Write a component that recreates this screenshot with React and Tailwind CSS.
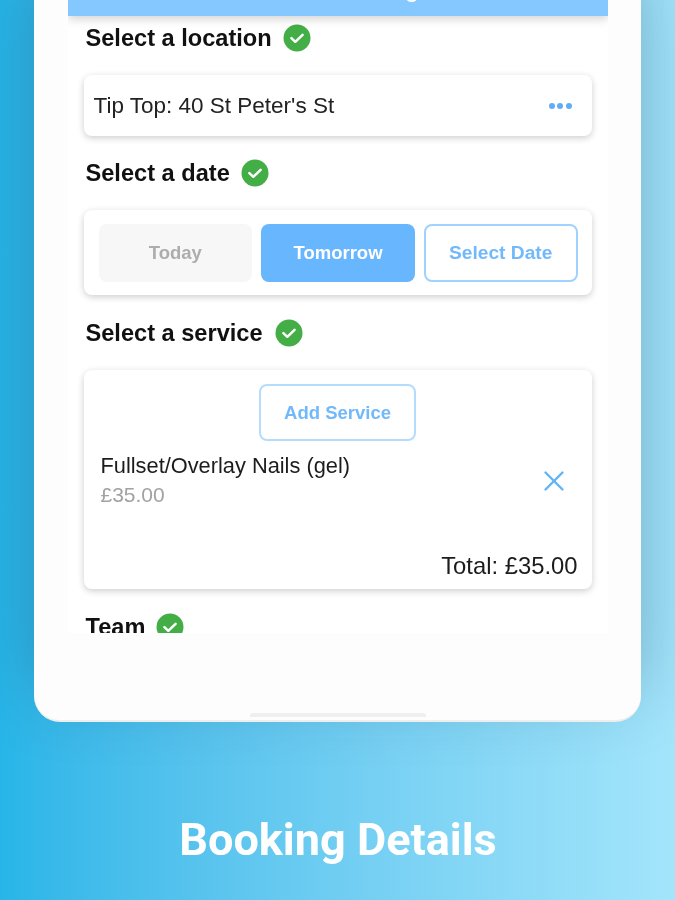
import { X } from 'lucide-react'

const FONT = "font-['Liberation_Sans',Arial,sans-serif]"

function CheckBadge() {
  return (
    <svg width="28" height="28" viewBox="0 0 28 28" className="shrink-0">
      <circle cx="14" cy="14" r="13.5" fill="#43ad46" />
      <path d="M8.4 14.2 L12.3 17.8 L19.6 10.8" fill="none" stroke="#fff" strokeWidth="2.5" strokeLinecap="round" strokeLinejoin="round" />
    </svg>
  )
}

function Heading({ title, gap }) {
  return (
    <div className={`flex h-[28px] items-center pl-[18px] ${gap}`}>
      <span className="text-[23.6px] leading-[28px] font-bold text-[#111111]">{title}</span>
      <CheckBadge />
    </div>
  )
}

function Card({ className, children }) {
  return (
    <div className={`mx-[16px] rounded-[8px] bg-white shadow-[0_2px_7px_rgba(0,0,0,0.2)] ${className}`}>
      {children}
    </div>
  )
}

function DateButton({ label, className }) {
  return (
    <div className={`flex h-[58px] items-center justify-center rounded-[8px] pt-[1px] font-bold ${className}`}>
      {label}
    </div>
  )
}

export default function App() {
  return (
    <div className={`${FONT} h-[900px] w-[675px] overflow-hidden bg-gradient-to-r from-[#27b5e8] to-[#a3e5fb]`}>
      <div className="mx-[34px] flex h-[722px] w-[607px] flex-col items-center rounded-b-[26px] border-b-2 border-[#eeeeee] bg-[#fdfdfd] shadow-[0_-30px_70px_rgba(0,40,70,0.28)]">
        <div className="h-[633px] w-[540px] shrink-0 overflow-hidden bg-white blur-[0.35px]">
          <div className="relative h-[16px] overflow-hidden bg-[#85c8ff] shadow-[0_3px_10px_rgba(0,0,0,0.18)]">
            <span className="absolute left-[338px] top-[-21px] text-[21px] leading-[24px] font-bold text-white">g</span>
          </div>
          <div className="pt-[8px]">
            <Heading title="Select a location" gap="gap-[11px]" />
            <Card className="mt-[23px] flex h-[61px] items-center justify-between pl-[10px] pr-[20px]">
              <span className="text-[22.5px] text-[#222222]">Tip Top: 40 St Peter's St</span>
              <div className="flex gap-[2.5px]">
                <span className="size-[6px] rounded-full bg-[#62abf5]" />
                <span className="size-[6px] rounded-full bg-[#62abf5]" />
                <span className="size-[6px] rounded-full bg-[#62abf5]" />
              </div>
            </Card>
            <div className="mt-[23px]">
              <Heading title="Select a date" gap="gap-[11px]" />
            </div>
            <Card className="mt-[23px] grid h-[85px] grid-cols-3 items-center gap-[9px] pl-[15px] pr-[14px]">
              <DateButton label="Today" className="bg-[#f7f7f7] text-[18.5px] text-[#adadad]" />
              <DateButton label="Tomorrow" className="bg-[#68b6fd] text-[18.5px] text-white" />
              <DateButton label="Select Date" className="border-2 border-[#a0d2fd] text-[19.2px] text-[#72b9fb]" />
            </Card>
            <div className="mt-[24px]">
              <Heading title="Select a service" gap="gap-[12px]" />
            </div>
            <Card className="mt-[23px] flex h-[219px] flex-col px-[14px] pt-[14px] pb-[9px]">
              <div className="mx-auto flex h-[57px] w-[157px] items-center justify-center rounded-[8px] border-2 border-[#b4dcfd] text-[18.5px] font-bold text-[#72b9fb]">
                Add Service
              </div>
              <div className="mt-[12px] flex items-center justify-between pl-[3px] pr-[7px]">
                <div>
                  <div className="text-[21.8px] leading-[26px] text-[#1c1c1c]">Fullset/Overlay Nails (gel)</div>
                  <div className="mt-[3px] text-[21px] leading-[26px] text-[#a2a2a2]">£35.00</div>
                </div>
                <X size={34} strokeWidth={1.7} className="text-[#62b4f6]" />
              </div>
              <div className="mt-auto text-right text-[23.8px] leading-[28px] text-[#1c1c1c]">Total: £35.00</div>
            </Card>
            <div className="mt-[24px]">
              <Heading title="Team" gap="gap-[11px]" />
            </div>
          </div>
        </div>
        <div className="mt-auto mb-[3px] h-[4px] w-[176px] rounded-t-[3px] bg-[#efefef]" />
      </div>
      <div className="mt-[92px] pl-[1px] text-center font-['Roboto',sans-serif] text-[45px] leading-[52px] font-bold text-white blur-[0.35px]">
        Booking Details
      </div>
    </div>
  )
}
